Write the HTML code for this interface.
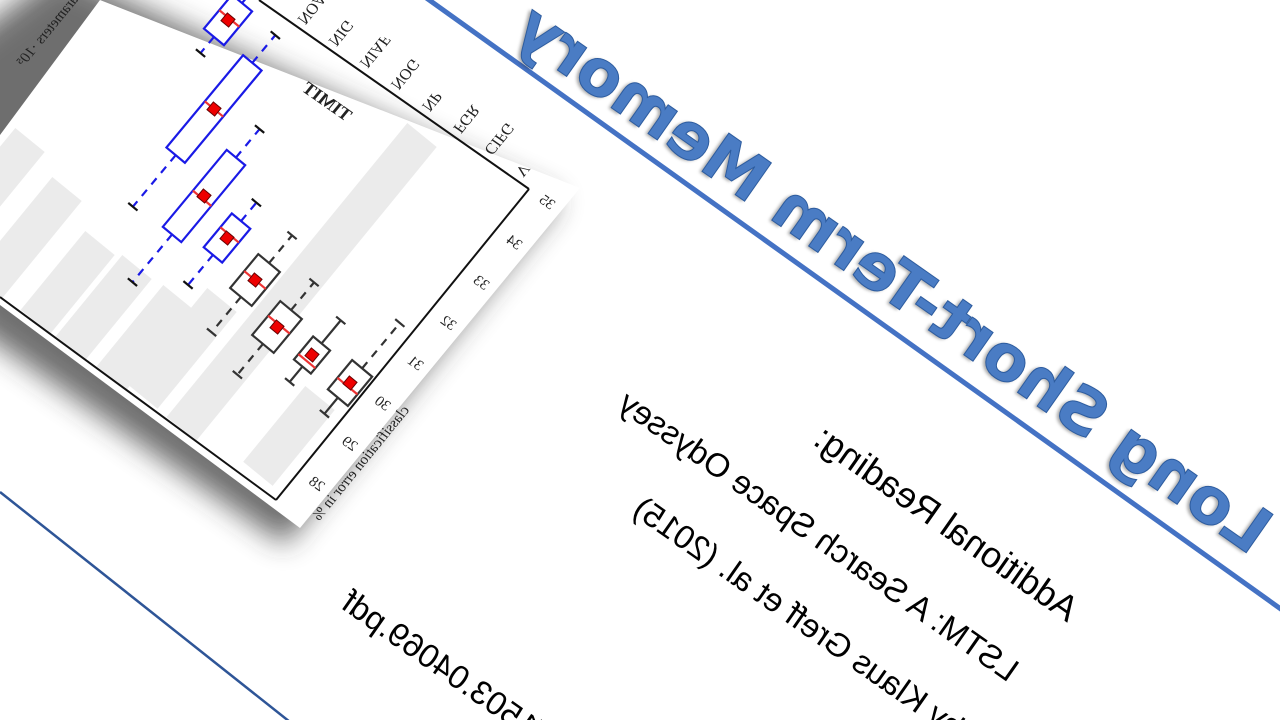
<!DOCTYPE html>
<html><head><meta charset="utf-8">
<style>
html,body{margin:0;padding:0;background:#fff;width:1280px;height:720px;overflow:hidden;position:relative}
#slide{position:absolute;left:0;top:0;width:1px;height:1px;transform-origin:0 0;transform:matrix(-0.819,-0.574,-0.574,0.819,1300,500)}
#slide div{position:absolute;white-space:nowrap;line-height:1}
.t{font-family:"DejaVu Sans","Liberation Sans",sans-serif;font-weight:bold;font-size:64px;color:#4a7cc4;-webkit-text-stroke:1px #2d5c9f;text-shadow:2px 2px 3px rgba(0,0,0,.35)}
.b{font-family:"Liberation Sans",sans-serif;color:#000}
svg{position:absolute;left:0;top:0}
</style></head><body>
<svg width="1280" height="720" viewBox="0 0 1280 720">
<defs><filter id="bl" x="-50%" y="-50%" width="200%" height="200%"><feGaussianBlur stdDeviation="14"/></filter></defs>
<line x1="425" y1="-3" x2="1285" y2="612" stroke="#4472c4" stroke-width="5"/>
<line x1="0" y1="492" x2="290" y2="722" stroke="#2e5597" stroke-width="2.5"/>
<polygon points="60,-30 560,200 285,545 -30,325 -60,60" fill="#333" opacity=".7" filter="url(#bl)"/>
<polygon points="100,0 580,188 300,528 0,305 0,135" fill="#fff"/>
<g fill="#ebebeb">
<rect x="0" y="-19" width="380" height="38" transform="translate(422,135) rotate(129.3)"/>
<rect x="0" y="-19" width="98" height="38" transform="translate(320,398) rotate(129.3)"/>
<rect x="0" y="-19" width="125" height="38" transform="translate(222,300) rotate(129.3)"/>
<rect x="0" y="-19" width="105" height="38" transform="translate(178,297) rotate(129.3)"/>
<rect x="0" y="-19" width="105" height="38" transform="translate(137,267) rotate(129.3)"/>
<rect x="0" y="-19" width="102" height="38" transform="translate(100,243) rotate(129.3)"/>
<rect x="0" y="-19" width="127" height="38" transform="translate(67,189) rotate(129.3)"/>
<rect x="0" y="-19" width="160" height="38" transform="translate(30,140) rotate(129.3)"/>
</g>
<g stroke="#111" stroke-width="2" fill="none">
<line x1="529" y1="189" x2="259" y2="0"/>
<line x1="529" y1="189" x2="276" y2="500"/>
<line x1="276" y1="500" x2="0" y2="297"/>
</g>
<g stroke-width="2.2" fill="none">
<g transform="translate(350,383) rotate(-50.3)" stroke="#333"><rect x="-19" y="-13" width="38" height="26" fill="#fff"/><line x1="19" y1="0" x2="78" y2="0" stroke-dasharray="8,7"/><line x1="78" y1="-6" x2="78" y2="6"/><line x1="-19" y1="0" x2="-40" y2="0"/><line x1="-40" y1="-6" x2="-40" y2="6"/><line x1="-4" y1="-13" x2="-4" y2="13" stroke="#e33"/><rect x="-5" y="-5" width="10" height="10" fill="#e00" stroke="#600" stroke-width="1"/></g>
<g transform="translate(312,355) rotate(-50.3)" stroke="#333"><rect x="-15" y="-11" width="30" height="22" fill="#fff"/><line x1="15" y1="0" x2="45" y2="0"/><line x1="45" y1="-6" x2="45" y2="6"/><line x1="-15" y1="0" x2="-35" y2="0"/><line x1="-35" y1="-6" x2="-35" y2="6"/><line x1="-8" y1="-11" x2="-8" y2="11" stroke="#e33"/><rect x="-5" y="-5" width="10" height="10" fill="#e00" stroke="#600" stroke-width="1"/></g>
<g transform="translate(277,327) rotate(-50.3)" stroke="#333"><rect x="-22" y="-14" width="44" height="28" fill="#fff"/><line x1="22" y1="0" x2="58" y2="0" stroke-dasharray="8,7"/><line x1="58" y1="-6" x2="58" y2="6"/><line x1="-22" y1="0" x2="-62" y2="0" stroke-dasharray="8,7"/><line x1="-62" y1="-6" x2="-62" y2="6"/><line x1="3" y1="-14" x2="3" y2="14" stroke="#e33"/><rect x="-5" y="-5" width="10" height="10" fill="#e00" stroke="#600" stroke-width="1"/></g>
<g transform="translate(255,280) rotate(-50.3)" stroke="#333"><rect x="-22" y="-14" width="44" height="28" fill="#fff"/><line x1="22" y1="0" x2="58" y2="0" stroke-dasharray="8,7"/><line x1="58" y1="-6" x2="58" y2="6"/><line x1="-22" y1="0" x2="-68" y2="0" stroke-dasharray="8,7"/><line x1="-68" y1="-6" x2="-68" y2="6"/><line x1="0" y1="-14" x2="0" y2="14" stroke="#e33"/><rect x="-5" y="-5" width="10" height="10" fill="#e00" stroke="#600" stroke-width="1"/></g>
<g transform="translate(227,238) rotate(-50.3)" stroke="#1a1ae6"><rect x="-22" y="-12" width="44" height="24" fill="#fff"/><line x1="22" y1="0" x2="46" y2="0" stroke-dasharray="8,7"/><line x1="46" y1="-6" x2="46" y2="6" stroke="#111"/><line x1="-22" y1="0" x2="-61" y2="0" stroke-dasharray="8,7"/><line x1="-61" y1="-6" x2="-61" y2="6" stroke="#111"/><line x1="4" y1="-12" x2="4" y2="12" stroke="#e33"/><rect x="-5" y="-5" width="10" height="10" fill="#e00" stroke="#600" stroke-width="1"/></g>
<g transform="translate(204,196) rotate(-50.3)" stroke="#1a1ae6"><rect x="-50" y="-12" width="100" height="24" fill="#fff"/><line x1="50" y1="0" x2="87" y2="0" stroke-dasharray="8,7"/><line x1="87" y1="-6" x2="87" y2="6" stroke="#111"/><line x1="-50" y1="0" x2="-112" y2="0" stroke-dasharray="8,7"/><line x1="-112" y1="-6" x2="-112" y2="6" stroke="#111"/><line x1="-3" y1="-12" x2="-3" y2="12" stroke="#e33"/><rect x="-5" y="-5" width="10" height="10" fill="#e00" stroke="#600" stroke-width="1"/></g>
<g transform="translate(214,109) rotate(-50.3)" stroke="#1a1ae6"><rect x="-60" y="-12" width="120" height="24" fill="#fff"/><line x1="60" y1="0" x2="96" y2="0" stroke-dasharray="8,7"/><line x1="96" y1="-6" x2="96" y2="6" stroke="#111"/><line x1="-60" y1="0" x2="-127" y2="0" stroke-dasharray="8,7"/><line x1="-127" y1="-6" x2="-127" y2="6" stroke="#111"/><line x1="0" y1="-12" x2="0" y2="12" stroke="#e33"/><rect x="-5" y="-5" width="10" height="10" fill="#e00" stroke="#600" stroke-width="1"/></g>
<g transform="translate(228,20) rotate(-50.3)" stroke="#1a1ae6"><rect x="-22" y="-13" width="44" height="26" fill="#fff"/><line x1="22" y1="0" x2="50" y2="0" stroke-dasharray="8,7"/><line x1="-22" y1="0" x2="-43" y2="0" stroke-dasharray="8,7"/><line x1="-43" y1="-6" x2="-43" y2="6" stroke="#111"/><line x1="2" y1="-13" x2="2" y2="13" stroke="#e33"/><rect x="-5" y="-5" width="10" height="10" fill="#e00" stroke="#600" stroke-width="1"/></g>
</g>
<g transform="matrix(-0.819,-0.573,-0.633,0.774,529,189)" font-family="Liberation Serif,serif" fill="#222">
<g font-size="15">
<text x="-30" y="5">35</text><text x="-30" y="57">34</text><text x="-30" y="109">33</text><text x="-30" y="161">32</text><text x="-30" y="213">31</text><text x="-30" y="265">30</text><text x="-30" y="317">29</text><text x="-30" y="369">28</text>
</g>
<text x="-48" y="250" font-size="15" transform="rotate(90 -48 250)">classification error in %</text>
<g font-size="16">
<text transform="translate(22,-6) rotate(-90)">V</text>
<text transform="translate(60,-6) rotate(-90)">CIFG</text>
<text transform="translate(98,-6) rotate(-90)">FGR</text>
<text transform="translate(136,-6) rotate(-90)">NP</text>
<text transform="translate(174,-6) rotate(-90)">NOG</text>
<text transform="translate(212,-6) rotate(-90)">NIAF</text>
<text transform="translate(250,-6) rotate(-90)">NIG</text>
<text transform="translate(288,-6) rotate(-90)">NOAF</text>
</g>
<text x="185" y="50" font-size="18" font-weight="bold">TIMIT</text>
<text transform="translate(470,30) rotate(90)" font-size="15">number of parameters ·10⁵</text>
</g>
</svg>
<div id="slide">
<div class="t" style="left:8px;top:21px">Long Short-Term Memory</div>
<div class="b" style="left:120px;top:204px;font-size:36px">Additional Reading:</div>
<div class="b" style="left:134px;top:289px;font-size:33px">LSTM: A Search Space Odyssey</div>
<div class="b" style="left:-60px;top:367px;font-size:33px;width:600px;text-align:right">by Klaus Greff et al. (2015)</div>
<div class="b" style="left:-100px;top:611px;font-size:33px;width:825px;text-align:right">https://arxiv.org/pdf/1503.04069.pdf</div>
</div>
</body></html>
